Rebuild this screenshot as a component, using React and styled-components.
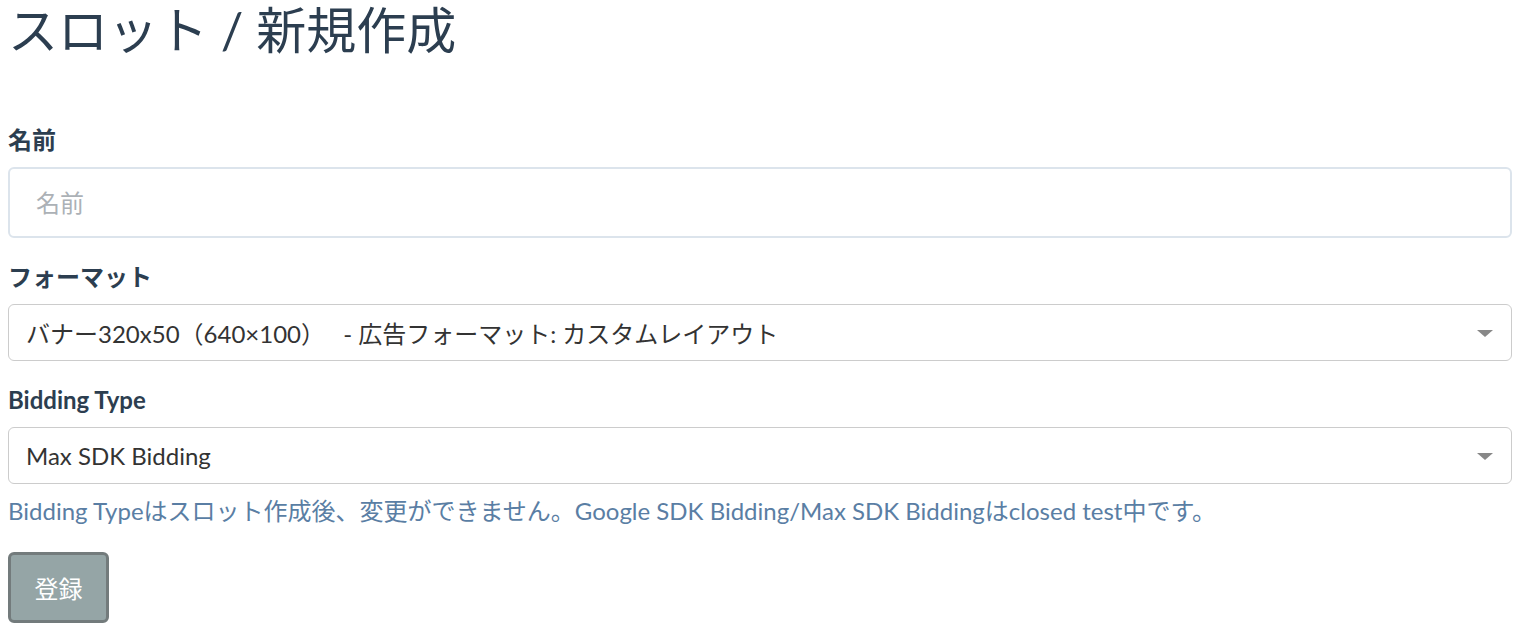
import React from 'react';
import styled, { createGlobalStyle } from 'styled-components';

const GlobalStyle = createGlobalStyle`
  body {
    margin: 0;
    background: #ffffff;
    font-family: Lato, "Noto Sans CJK JP", sans-serif;
    color: #2c3e50;
  }
`;

const Page = styled.div`
  padding: 0 10px 0 8px;
`;

const Title = styled.h1`
  margin: 0 0 64px;
  font-size: 50px;
  font-weight: 400;
  line-height: 60px;
  color: #2c3e50;
  font-family: Lato, "Noto Sans CJK JP", sans-serif;
`;

const FormGroup = styled.div`
  margin-bottom: 23px;
`;

const Label = styled.label`
  display: block;
  font-size: 24px;
  font-weight: 700;
  line-height: 31px;
  margin-bottom: 12px;
  color: #2c3e50;
`;

const TextInput = styled.input`
  display: block;
  box-sizing: border-box;
  width: 100%;
  height: 71px;
  padding: 0 26px;
  border: 2px solid #dce4ec;
  border-radius: 6px;
  font-family: Lato, "Noto Sans CJK JP", sans-serif;
  font-size: 24px;
  color: #2c3e50;
  outline: none;
  &::placeholder {
    color: #acb1b6;
  }
`;

const Select = styled.div`
  display: flex;
  align-items: center;
  justify-content: space-between;
  box-sizing: border-box;
  height: 57px;
  padding: 0 18px 0 17px;
  border: 1px solid #cccccc;
  border-radius: 6px;
  font-size: 24px;
  color: #333333;
  white-space: pre;
`;

const Arrow = styled.span`
  width: 0;
  height: 0;
  border-left: 8px solid transparent;
  border-right: 8px solid transparent;
  border-top: 7px solid #888888;
  margin-top: 2px;
`;

const Help = styled.p`
  margin: 11px 0 0;
  font-size: 24px;
  line-height: 31px;
  color: #5a7ea4;
`;

const Submit = styled.button`
  margin-top: 26px;
  width: 101px;
  height: 71px;
  box-sizing: border-box;
  background: #95a5a6;
  border: 3px solid #737b7c;
  border-radius: 6px;
  color: #ffffff;
  font-family: "Noto Sans CJK JP", sans-serif;
  font-size: 24px;
  padding: 0;
`;

function Dropdown({ value }) {
  return (
    <Select>
      <span>{value}</span>
      <Arrow />
    </Select>
  );
}

export default function App() {
  return (
    <Page>
      <GlobalStyle />
      <Title>スロット / 新規作成</Title>
      <FormGroup>
        <Label>名前</Label>
        <TextInput placeholder="名前" />
      </FormGroup>
      <FormGroup>
        <Label>フォーマット</Label>
        <Dropdown value={'バナー320x50（640×100）　 - 広告フォーマット: カスタムレイアウト'} />
      </FormGroup>
      <div>
        <Label>Bidding Type</Label>
        <Dropdown value="Max SDK Bidding" />
        <Help>Bidding Typeはスロット作成後、変更ができません。Google SDK Bidding/Max SDK Biddingはclosed test中です。</Help>
      </div>
      <Submit>登録</Submit>
    </Page>
  );
}
